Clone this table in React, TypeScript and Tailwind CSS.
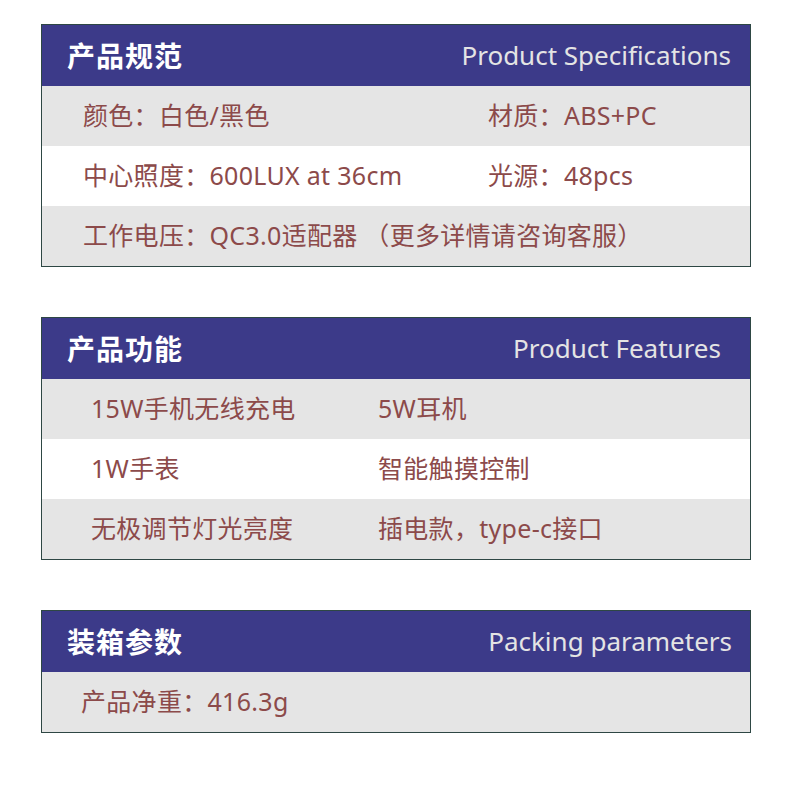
import React from "react";

type Row = string[];

const font = "font-['Noto_Sans','Noto_Sans_CJK_SC',sans-serif]";

const tables: {
  zh: string;
  en: string;
  enPad: string;
  firstCol: string;
  rows: Row[];
}[] = [
  {
    zh: "产品规范",
    en: "Product Specifications",
    enPad: "pr-[19px]",
    firstCol: "w-[446px] pl-[41px]",
    rows: [
      ["颜色：白色/黑色", "材质：ABS+PC"],
      ["中心照度：600LUX at 36cm", "光源：48pcs"],
      ["工作电压：QC3.0适配器 （更多详情请咨询客服）"],
    ],
  },
  {
    zh: "产品功能",
    en: "Product Features",
    enPad: "pr-[29px]",
    firstCol: "w-[336px] pl-[49px]",
    rows: [
      ["15W手机无线充电", "5W耳机"],
      ["1W手表", "智能触摸控制"],
      ["无极调节灯光亮度", "插电款，type-c接口"],
    ],
  },
  {
    zh: "装箱参数",
    en: "Packing parameters",
    enPad: "pr-[18px]",
    firstCol: "w-[446px] pl-[39px]",
    rows: [["产品净重：416.3g"]],
  },
];

export default function App() {
  return (
    <div className={`w-[790px] h-[787px] bg-white pt-[24px] pl-[41px] flex flex-col gap-[50px] ${font}`}>
      {tables.map((t) => (
        <div key={t.zh} className="w-[710px] border border-[#2e4744]">
          <div className="h-[61px] bg-[#3c3a89] flex items-center justify-between pl-[25px]">
            <span className="text-white text-[28px] font-bold tracking-[1px]">{t.zh}</span>
            <span className={`text-[#e4e4e4] text-[26px] ${t.enPad}`}>{t.en}</span>
          </div>
          {t.rows.map((r, i) => (
            <div
              key={i}
              className={`h-[60px] flex items-center text-[25px] tracking-[0.3px] text-[#8c4a4a] whitespace-nowrap ${
                i % 2 === 0 ? "bg-[#e5e5e5]" : "bg-white"
              }`}
            >
              <span className={r.length > 1 ? t.firstCol : t.firstCol.split(" ")[1]}>{r[0]}</span>
              {r[1] && <span>{r[1]}</span>}
            </div>
          ))}
        </div>
      ))}
    </div>
  );
}
